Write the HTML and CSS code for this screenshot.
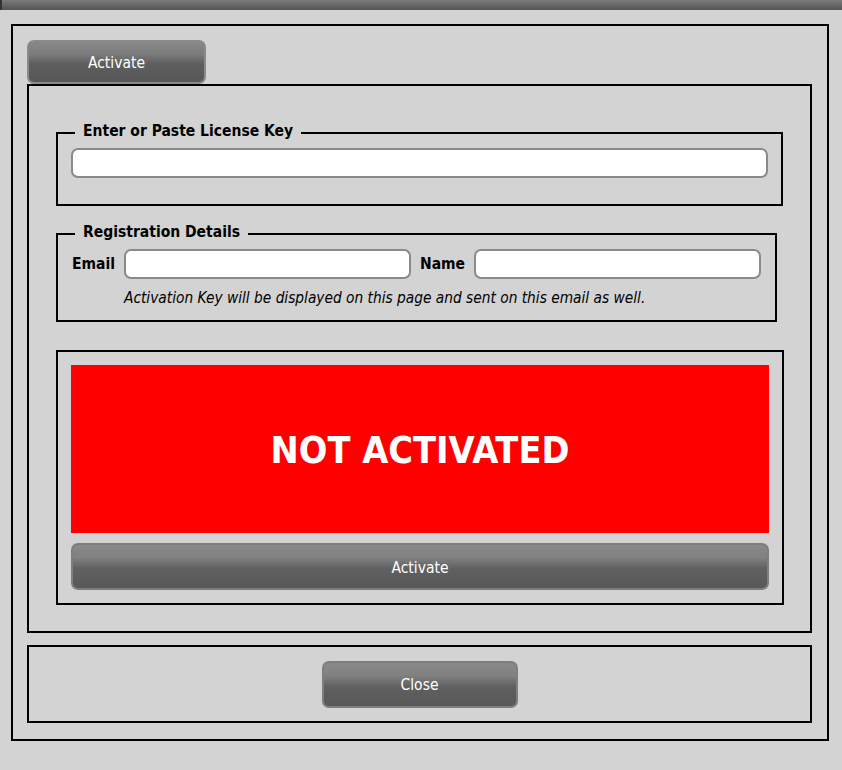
FILE: index.html
```html
<!DOCTYPE html>
<html>
<head>
<meta charset="utf-8">
<title>Activation</title>
<link rel="stylesheet" href="styles.css">
</head>
<body>
<div class="titlebar"></div>
<div class="dialog">
  <div class="tab">Activate</div>
  <div class="panel">
    <fieldset class="group group-key">
      <legend>Enter or Paste License Key</legend>
      <input class="field field-key" type="text">
    </fieldset>
    <fieldset class="group group-reg">
      <legend>Registration Details</legend>
      <div class="reg-row">
        <label class="lbl">Email</label>
        <input class="field field-email" type="text">
        <label class="lbl lbl-name">Name</label>
        <input class="field field-name" type="text">
      </div>
      <p class="note">Activation Key will be displayed on this page and sent on this email as well.</p>
    </fieldset>
    <div class="status">
      <div class="status-banner">NOT ACTIVATED</div>
      <button class="btn btn-wide">Activate</button>
    </div>
  </div>
  <div class="footer">
    <button class="btn btn-close">Close</button>
  </div>
</div>
</body>
</html>
```
FILE: styles.css
```css
html, body {
  margin: 0;
  padding: 0;
  background: #d3d3d3;
  font-family: "DejaVu Sans", Verdana, sans-serif;
  font-stretch: condensed;
  color: #000;
}

.titlebar {
  height: 10px;
  background: linear-gradient(#7a7a7a, #545454);
  border-left: 2px solid #333;
}

.dialog {
  margin: 14px 0 0 11px;
  border: 2px solid #000;
  padding: 14px 0 0 14px;
  box-sizing: content-box;
  width: 800px;
  height: 699px;
}

.tab {
  box-sizing: border-box;
  width: 179px;
  height: 44px;
  border: 2px solid #8a8a8a;
  border-radius: 7px;
  background: linear-gradient(#888 0%, #7c7c7c 30%, #5e5e5e 55%, #575757 100%);
  color: #fff;
  font-size: 15.5px;
  display: flex;
  align-items: center;
  justify-content: center;
  padding-top: 2px;
}

.panel {
  height: 545px;
  border: 2px solid #000;
  padding: 0 0 0 27px;
  box-sizing: content-box;
  width: 754px;
}

.group {
  margin: 0;
  border: 2px solid #000;
  padding: 0 13px;
  min-width: 0;
}

/* extra bottom padding lifts the caption a little above the frame line */
.group legend {
  font-size: 15.5px;
  font-weight: bold;
  line-height: 18px;
  padding: 0 8px 4px;
  margin-left: 4px;
}

.group-key {
  margin-top: 36px;
  width: 697px;
  padding-top: 4px;
  padding-bottom: 26px;
}

.field {
  display: block;
  box-sizing: border-box;
  height: 30px;
  border: 2px solid #8a8a8a;
  border-radius: 7px;
  background: #fff;
  margin: 0;
  padding: 0 6px;
  font: inherit;
  outline: none;
}

.field-key {
  width: 697px;
}

.group-reg {
  margin-top: 17px;
  width: 689px;
  padding-left: 14px;
  padding-right: 14px;
  padding-top: 4px;
  padding-bottom: 13px;
}

.group-reg legend {
  margin-left: 3px;
}

.reg-row {
  display: flex;
  align-items: center;
}

.lbl {
  font-size: 15.5px;
  font-weight: bold;
  width: 52px;
}

.lbl-name {
  width: auto;
  margin-left: 9px;
  margin-right: 9px;
}

.field-email,
.field-name {
  width: 287px;
}

.note {
  margin: 10px 0 0 52px;
  font-size: 15.3px;
  font-style: italic;
  line-height: 18px;
}

.status {
  margin-top: 28px;
  width: 698px;
  border: 2px solid #000;
  padding: 13px;
  display: flex;
  flex-direction: column;
  gap: 10px;
}

.status-banner {
  height: 168px;
  background: #ff0000;
  color: #fff;
  font-size: 37.5px;
  font-weight: bold;
  display: flex;
  align-items: center;
  justify-content: center;
  padding-top: 2px;
  box-sizing: border-box;
}

.btn {
  box-sizing: border-box;
  height: 47px;
  border: 2px solid #7e7e7e;
  border-radius: 7px;
  background: linear-gradient(#8a8a8a 0%, #808080 30%, #606060 55%, #585858 100%);
  color: #fff;
  font-family: inherit;
  font-stretch: condensed;
  font-size: 15.5px;
  padding: 2px 0 0;
}

.btn-wide {
  width: 698px;
}

.footer {
  margin-top: 12px;
  width: 781px;
  height: 74px;
  border: 2px solid #000;
  display: flex;
  align-items: center;
  justify-content: center;
}

.btn-close {
  width: 196px;
}
```
